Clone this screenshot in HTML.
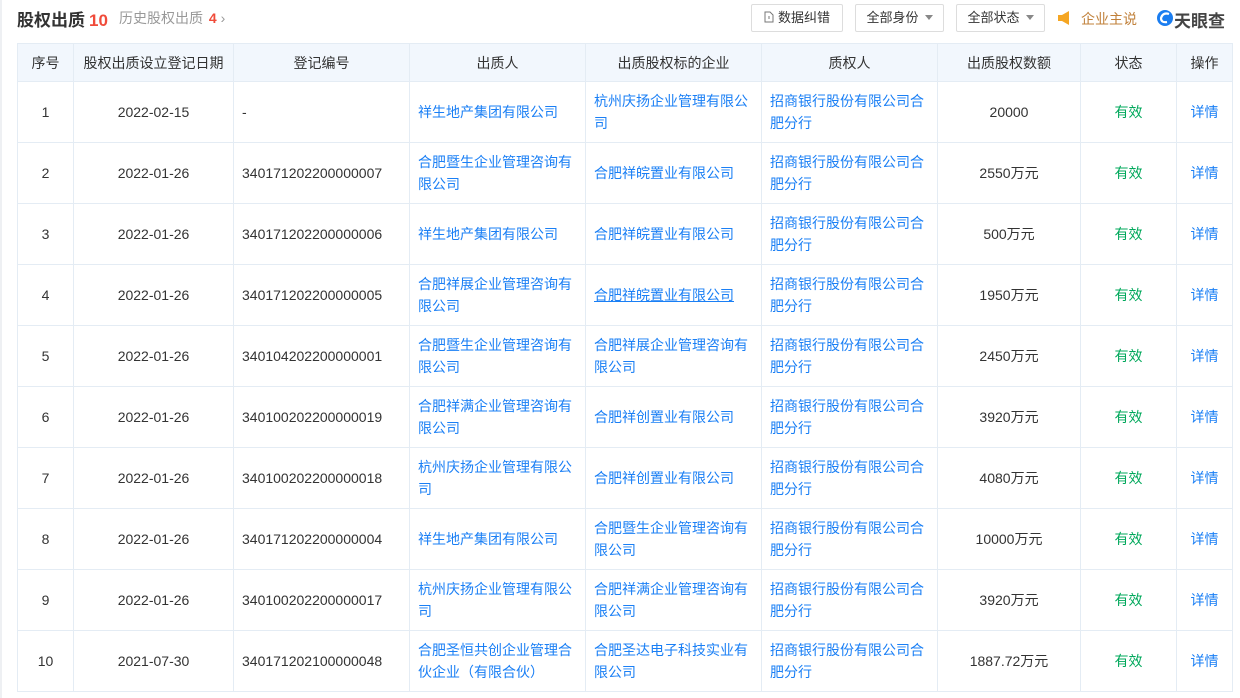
<!DOCTYPE html>
<html><head><meta charset="utf-8"><style>
*{margin:0;padding:0;box-sizing:border-box}
body{width:1240px;height:698px;background:#fff;font-family:"Liberation Sans","Noto Sans CJK SC",sans-serif;font-size:14px;color:#333;position:relative;overflow:hidden}
.edge{position:absolute;left:0;top:0;width:2px;height:698px;background:#eef0f3}
.title{position:absolute;left:17px;top:6px;font-size:17px;font-weight:bold;color:#333}
.title .n{color:#f04b3a;margin-left:4px}
.hist{position:absolute;left:119px;top:8px;font-size:14px;color:#999}
.hist b{color:#f04b3a;margin-left:2px}
.btn{position:absolute;top:4px;height:28px;border:1px solid #ddd;border-radius:2px;font-size:13px;color:#333;line-height:26px;text-align:center}
.tri{display:inline-block;width:0;height:0;border-left:4px solid transparent;border-right:4px solid transparent;border-top:5px solid #888;margin-left:6px;vertical-align:2px}
table{position:absolute;left:17px;top:43px;border-collapse:collapse;table-layout:fixed;width:1215px}
td,th{border:1px solid #e4ecf4;line-height:22px}
th{background:#f2f7fd;height:38px;font-weight:normal;color:#333;text-align:center}
td{height:61px;padding:0 8px}
.c{text-align:center}
a{color:#1a7ff5;text-decoration:none}
.g{color:#00a85b}
</style></head><body>
<div class="edge"></div>
<div class="title">股权出质<span class="n">10</span></div>
<div class="hist">历史股权出质 <b>4</b> ›</div>
<div class="btn" style="left:751px;width:92px"><svg width="10" height="12" viewBox="0 0 10 12" style="vertical-align:-1px;margin-right:4px"><path d="M1 1H6L9 4V11H1Z" fill="none" stroke="#777"/><path d="M5 5V8" stroke="#777"/></svg>数据纠错</div>
<div class="btn" style="left:855px;width:89px">全部身份<span class="tri"></span></div>
<div class="btn" style="left:956px;width:89px">全部状态<span class="tri"></span></div>
<svg style="position:absolute;left:1057px;top:10px" width="16" height="16" viewBox="0 0 16 16"><rect x="1" y="5" width="4" height="6" fill="#f5a623"/><path d="M5 5 L12 1 L12 15 L5 11Z" fill="#f5a623"/></svg>
<div style="position:absolute;left:1081px;top:9px;color:#c0803a;font-size:14px">企业主说</div>
<svg style="position:absolute;left:1156px;top:9px" width="18" height="18" viewBox="0 0 18 18"><circle cx="9" cy="9" r="8" fill="#1a7df0"/><path d="M13 5 Q7 3 5 9 Q5 14 11 13" stroke="#fff" stroke-width="2.2" fill="none"/></svg>
<div style="position:absolute;left:1174px;top:7px;font-size:17px;font-weight:bold;color:#444">天眼查</div>
<table>
<colgroup><col style="width:56px"><col style="width:160px"><col style="width:176px"><col style="width:176px"><col style="width:176px"><col style="width:176px"><col style="width:143px"><col style="width:96px"><col style="width:56px"></colgroup>
<tr><th>序号</th><th>股权出质设立登记日期</th><th>登记编号</th><th>出质人</th><th>出质股权标的企业</th><th>质权人</th><th>出质股权数额</th><th>状态</th><th>操作</th></tr>
<tr><td class="c">1</td><td class="c">2022-02-15</td><td>-</td><td><a>祥生地产集团有限公司</a></td><td><a>杭州庆扬企业管理有限公司</a></td><td><a>招商银行股份有限公司合肥分行</a></td><td class="c">20000</td><td class="c g">有效</td><td class="c"><a>详情</a></td></tr>
<tr><td class="c">2</td><td class="c">2022-01-26</td><td>340171202200000007</td><td><a>合肥暨生企业管理咨询有限公司</a></td><td><a>合肥祥皖置业有限公司</a></td><td><a>招商银行股份有限公司合肥分行</a></td><td class="c">2550万元</td><td class="c g">有效</td><td class="c"><a>详情</a></td></tr>
<tr><td class="c">3</td><td class="c">2022-01-26</td><td>340171202200000006</td><td><a>祥生地产集团有限公司</a></td><td><a>合肥祥皖置业有限公司</a></td><td><a>招商银行股份有限公司合肥分行</a></td><td class="c">500万元</td><td class="c g">有效</td><td class="c"><a>详情</a></td></tr>
<tr><td class="c">4</td><td class="c">2022-01-26</td><td>340171202200000005</td><td><a>合肥祥展企业管理咨询有限公司</a></td><td><a style="text-decoration:underline">合肥祥皖置业有限公司</a></td><td><a>招商银行股份有限公司合肥分行</a></td><td class="c">1950万元</td><td class="c g">有效</td><td class="c"><a>详情</a></td></tr>
<tr><td class="c">5</td><td class="c">2022-01-26</td><td>340104202200000001</td><td><a>合肥暨生企业管理咨询有限公司</a></td><td><a>合肥祥展企业管理咨询有限公司</a></td><td><a>招商银行股份有限公司合肥分行</a></td><td class="c">2450万元</td><td class="c g">有效</td><td class="c"><a>详情</a></td></tr>
<tr><td class="c">6</td><td class="c">2022-01-26</td><td>340100202200000019</td><td><a>合肥祥满企业管理咨询有限公司</a></td><td><a>合肥祥创置业有限公司</a></td><td><a>招商银行股份有限公司合肥分行</a></td><td class="c">3920万元</td><td class="c g">有效</td><td class="c"><a>详情</a></td></tr>
<tr><td class="c">7</td><td class="c">2022-01-26</td><td>340100202200000018</td><td><a>杭州庆扬企业管理有限公司</a></td><td><a>合肥祥创置业有限公司</a></td><td><a>招商银行股份有限公司合肥分行</a></td><td class="c">4080万元</td><td class="c g">有效</td><td class="c"><a>详情</a></td></tr>
<tr><td class="c">8</td><td class="c">2022-01-26</td><td>340171202200000004</td><td><a>祥生地产集团有限公司</a></td><td><a>合肥暨生企业管理咨询有限公司</a></td><td><a>招商银行股份有限公司合肥分行</a></td><td class="c">10000万元</td><td class="c g">有效</td><td class="c"><a>详情</a></td></tr>
<tr><td class="c">9</td><td class="c">2022-01-26</td><td>340100202200000017</td><td><a>杭州庆扬企业管理有限公司</a></td><td><a>合肥祥满企业管理咨询有限公司</a></td><td><a>招商银行股份有限公司合肥分行</a></td><td class="c">3920万元</td><td class="c g">有效</td><td class="c"><a>详情</a></td></tr>
<tr><td class="c">10</td><td class="c">2021-07-30</td><td>340171202100000048</td><td><a>合肥圣恒共创企业管理合伙企业（有限合伙）</a></td><td><a>合肥圣达电子科技实业有限公司</a></td><td><a>招商银行股份有限公司合肥分行</a></td><td class="c">1887.72万元</td><td class="c g">有效</td><td class="c"><a>详情</a></td></tr>
</table>
</body></html>
